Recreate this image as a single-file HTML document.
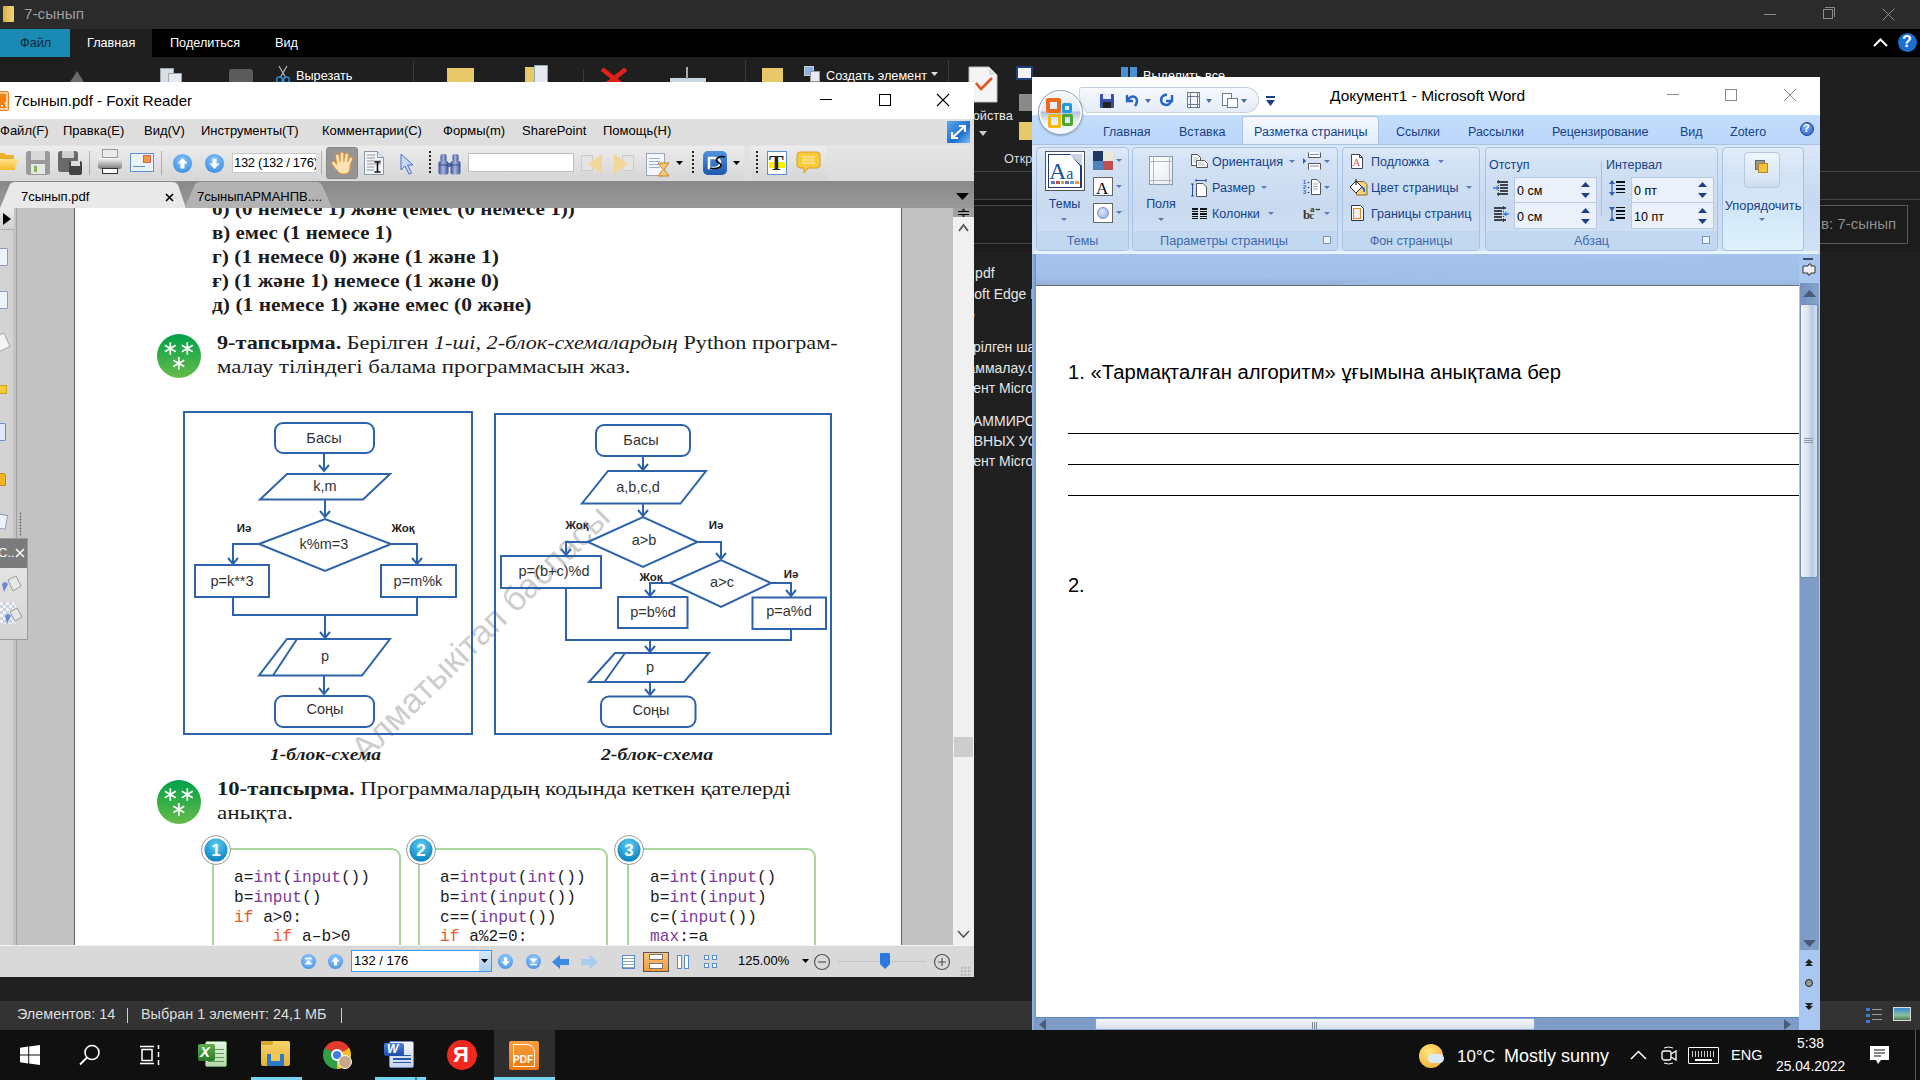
<!DOCTYPE html>
<html><head><meta charset="utf-8">
<style>
*{box-sizing:border-box}
html,body{margin:0;padding:0}
body{width:1920px;height:1080px;position:relative;overflow:hidden;background:#202020;font-family:"Liberation Sans",sans-serif}
.a{position:absolute}
.t{position:absolute;white-space:nowrap}
</style></head><body>
<!-- EXPLORER BACKGROUND -->
<div class="a" style="left:0;top:0;width:1920px;height:29px;background:#2b2b2b"></div>
<div class="a" style="left:3px;top:6px;width:11px;height:16px;background:linear-gradient(90deg,#d8b24a,#f3d27a);border-radius:1px"></div>
<div class="t" style="left:24px;top:5px;font-size:15.3px;color:#9e9e9e">7-сынып</div>
<div class="a" style="left:1764px;top:14px;width:12px;height:1px;background:#8a8a8a"></div>
<div class="a" style="left:1823px;top:9px;width:10px;height:10px;border:1px solid #8a8a8a"></div>
<div class="a" style="left:1825px;top:7px;width:10px;height:10px;border-top:1px solid #8a8a8a;border-right:1px solid #8a8a8a"></div>
<svg class="a" style="left:1882px;top:8px" width="13" height="13"><path d="M0.5 0.5L12.5 12.5M12.5 0.5L0.5 12.5" stroke="#8a8a8a" stroke-width="1"/></svg>
<div class="a" style="left:0;top:29px;width:1920px;height:28px;background:#000"></div>
<div class="a" style="left:0;top:29px;width:70px;height:28px;background:#1a8ab2"></div>
<div class="t" style="left:20px;top:36px;font-size:12.7px;color:#0d2a3a">Файл</div>
<div class="a" style="left:70px;top:29px;width:82px;height:28px;background:#1f1f1f"></div>
<div class="t" style="left:87px;top:36px;font-size:12.7px;color:#fff">Главная</div>
<div class="t" style="left:170px;top:36px;font-size:12.7px;color:#fff">Поделиться</div>
<div class="t" style="left:275px;top:36px;font-size:12.7px;color:#fff">Вид</div>
<svg class="a" style="left:1873px;top:38px" width="15" height="9"><path d="M1 8L7.5 1.5L14 8" stroke="#fff" stroke-width="2" fill="none"/></svg>
<div class="a" style="left:1898px;top:33px;width:19px;height:19px;border-radius:50%;background:#1a6fd0"></div>
<div class="t" style="left:1902px;top:33px;font-size:16px;font-weight:bold;color:#fff">?</div>
<div class="a" style="left:0;top:57px;width:1920px;height:114px;background:#1f1f1f"></div>
<svg class="a" style="left:70px;top:71px" width="14" height="11"><path d="M0 11L7 0L14 11Z" fill="#6a6a6a"/></svg>
<div class="a" style="left:160px;top:68px;width:14px;height:16px;background:#d8dde6;border:1px solid #9aa"></div>
<div class="a" style="left:168px;top:73px;width:14px;height:14px;background:#e6eaf0;border:1px solid #9aa"></div>
<div class="a" style="left:229px;top:69px;width:24px;height:16px;background:#5a5a5a;border-radius:3px"></div>
<svg class="a" style="left:276px;top:66px" width="14" height="18"><path d="M3 0L10 12M11 0L4 12" stroke="#bbb" stroke-width="1.2"/><circle cx="3.5" cy="14" r="3" fill="none" stroke="#2a8ad8" stroke-width="1.5"/><circle cx="10.5" cy="14" r="3" fill="none" stroke="#2a8ad8" stroke-width="1.5"/></svg>
<div class="t" style="left:296px;top:69px;font-size:12.7px;color:#fff">Вырезать</div>
<div class="a" style="left:413px;top:62px;width:1px;height:25px;background:#3a3a3a"></div>
<div class="a" style="left:447px;top:68px;width:27px;height:16px;background:#e8c96a"></div>
<div class="a" style="left:525px;top:67px;width:11px;height:16px;background:#e8c96a"></div>
<div class="a" style="left:534px;top:65px;width:14px;height:18px;background:#e6eaf0;border:1px solid #8aa"></div>
<div class="a" style="left:583px;top:69px;width:1px;height:20px;background:#3a3a3a"></div>
<svg class="a" style="left:600px;top:68px" width="28" height="16"><path d="M2 1L26 20M26 1L2 20" stroke="#e0201a" stroke-width="4.5"/></svg>
<div class="a" style="left:670px;top:78px;width:36px;height:6px;background:#c8d4e0"></div>
<div class="a" style="left:686px;top:67px;width:2px;height:12px;background:#aaa"></div>
<div class="a" style="left:745px;top:60px;width:1px;height:25px;background:#3a3a3a"></div>
<div class="a" style="left:762px;top:68px;width:21px;height:16px;background:#e8c96a"></div>
<div class="a" style="left:804px;top:66px;width:10px;height:10px;background:#8ab4e8;border:1px solid #ccc"></div>
<div class="a" style="left:810px;top:71px;width:10px;height:11px;background:#e6eaf0;border:1px solid #999"></div>
<div class="t" style="left:826px;top:69px;font-size:12.7px;color:#fff">Создать элемент</div>
<svg class="a" style="left:931px;top:72px" width="7" height="4"><path d="M0 0h7L3.5 4z" fill="#ddd"/></svg>
<div class="a" style="left:948px;top:60px;width:1px;height:110px;background:#3a3a3a"></div>
<!-- properties icon -->
<svg class="a" style="left:968px;top:66px" width="30" height="37"><path d="M1 1H21L29 9V36H1Z" fill="#f4f4f4" stroke="#bbb"/><path d="M21 1V9H29" fill="#ddd"/><path d="M8 17L13 23L24 12" stroke="#e0561c" stroke-width="2.6" fill="none"/></svg>
<div class="t" style="left:957px;top:109px;font-size:12.7px;color:#e8e8e8">Свойства</div>
<svg class="a" style="left:979px;top:131px" width="8" height="5"><path d="M0 0h8L4 5z" fill="#ccc"/></svg>
<div class="a" style="left:1016px;top:66px;width:17px;height:14px;background:#f4f4f4;border:2px solid #1f3f7a"></div>
<div class="a" style="left:1019px;top:94px;width:14px;height:17px;background:#8a8a8a"></div>
<div class="a" style="left:1019px;top:122px;width:13px;height:18px;background:#e8c96a"></div>
<div class="t" style="left:1004px;top:152px;font-size:12.7px;color:#d8d8d8">Открыть</div>
<div class="t" style="left:1143px;top:69px;font-size:12.7px;color:#fff">Выделить все</div>
<div class="a" style="left:1121px;top:67px;width:17px;height:14px;background:repeating-linear-gradient(90deg,#4a90d8 0 7px,transparent 7px 9px)"></div>
<div class="a" style="left:0;top:171px;width:1920px;height:1px;background:#464646"></div>
<div class="a" style="left:0;top:199px;width:1920px;height:1px;background:#464646"></div>
<div class="a" style="left:0;top:200px;width:1920px;height:51px;background:#1c1c1c"></div>
<div class="a" style="left:0;top:200px;width:1810px;height:5px;background:#171717"></div>
<div class="a" style="left:0;top:205px;width:1810px;height:1px;background:#464646"></div>
<div class="a" style="left:0;top:243px;width:1810px;height:1px;background:#464646"></div>
<div class="a" style="left:1780px;top:205px;width:128px;height:39px;border:1px solid #595959;background:#1c1c1c"></div>
<div class="t" style="left:1821px;top:215px;font-size:15px;color:#8e8e8e">в: 7-сынып</div>
<!-- file list text (clipped by windows) -->
<div class="t" style="left:921px;top:265px;font-size:14px;color:#e6e6e6">7сынып.pdf</div>
<div class="t" style="left:933px;top:286px;font-size:14px;color:#e6e6e6">Microsoft Edge PDF</div>
<div class="t" style="left:932px;top:306px;font-size:14px;color:#e6e6e6">24 135</div>
<div class="t" style="left:956px;top:339px;font-size:14px;color:#e6e6e6">Берілген шаблон</div>
<div class="t" style="left:929px;top:360px;font-size:14px;color:#e6e6e6">Программалау.docx</div>
<div class="t" style="left:933px;top:380px;font-size:14px;color:#e6e6e6">Документ Microsoft Word</div>
<div class="t" style="left:927px;top:413px;font-size:14px;color:#e6e6e6">ПРОГРАММИРОВАНИЕ</div>
<div class="t" style="left:956px;top:433px;font-size:14px;color:#e6e6e6">РАВНЫХ УСЛОВИЙ</div>
<div class="t" style="left:933px;top:453px;font-size:14px;color:#e6e6e6">Документ Microsoft Word</div>
<!-- status bar -->
<div class="a" style="left:0;top:1001px;width:1920px;height:29px;background:#333"></div>
<div class="t" style="left:17px;top:1006px;font-size:14.4px;color:#dedede">Элементов: 14</div>
<div class="a" style="left:127px;top:1008px;width:1px;height:15px;background:#cfcfcf"></div>
<div class="t" style="left:141px;top:1006px;font-size:14.4px;color:#dedede">Выбран 1 элемент: 24,1 МБ</div>
<div class="a" style="left:341px;top:1008px;width:1px;height:15px;background:#cfcfcf"></div>
<div class="a" style="left:1866px;top:1008px;width:4px;height:16px;background:repeating-linear-gradient(#3a7ad0 0 3px,transparent 3px 6px)"></div>
<div class="a" style="left:1872px;top:1009px;width:10px;height:14px;background:repeating-linear-gradient(#9a9a9a 0 1px,transparent 1px 5px)"></div>
<div class="a" style="left:1893px;top:1007px;width:18px;height:14px;background:linear-gradient(#3a8ad0,#8ac0a0 60%,#4a7a50);border:1px solid #ddd"></div>
<!-- FOXIT -->

<div id="fox" class="a" style="left:0;top:82px;width:974px;height:895px;background:#fff;overflow:hidden">
 <!-- title -->
 <svg class="a" style="left:-8px;top:8px" width="18" height="22"><rect x="1" y="1" width="16" height="20" rx="2.5" fill="#f08010"/><rect x="3" y="3" width="12" height="16" fill="none" stroke="#fff" stroke-width="1.2"/><path d="M9 16H11M12.5 13H14V16" stroke="#fff" stroke-width="1.3" fill="none"/></svg>
 <div class="t" style="left:14px;top:10px;font-size:15px;color:#000">7сынып.pdf - Foxit Reader</div>
 <div class="a" style="left:820px;top:17px;width:12px;height:1px;background:#000"></div>
 <div class="a" style="left:879px;top:12px;width:12px;height:12px;border:1px solid #000"></div>
 <svg class="a" style="left:936px;top:11px" width="14" height="14"><path d="M1 1L13 13M13 1L1 13" stroke="#000" stroke-width="1.1"/></svg>
 <!-- menu -->
 <div class="a" style="left:0;top:37px;width:974px;height:26px;background:#dedede"></div>
 <div class="t" style="left:0;top:41px;font-size:13px;color:#000">Файл(F)</div>
 <div class="t" style="left:63px;top:41px;font-size:13px;color:#000">Правка(E)</div>
 <div class="t" style="left:144px;top:41px;font-size:13px;color:#000">Вид(V)</div>
 <div class="t" style="left:201px;top:41px;font-size:13px;color:#000">Инструменты(T)</div>
 <div class="t" style="left:322px;top:41px;font-size:13px;color:#000">Комментарии(C)</div>
 <div class="t" style="left:443px;top:41px;font-size:13px;color:#000">Формы(m)</div>
 <div class="t" style="left:522px;top:41px;font-size:13px;color:#000">SharePoint</div>
 <div class="t" style="left:603px;top:41px;font-size:13px;color:#000">Помощь(H)</div>
 <div class="a" style="left:947px;top:39px;width:23px;height:22px;background:linear-gradient(135deg,#5aa9ef,#1d6fd0 60%,#7cc0f5)"></div>
 <svg class="a" style="left:947px;top:39px" width="23" height="22"><path d="M5 17L18 5M12 5h6v6M5 11v6h6" stroke="#fff" stroke-width="2.2" fill="none"/></svg>
 <!-- toolbar -->
 <div class="a" style="left:0;top:63px;width:974px;height:36px;background:linear-gradient(#e4e4e4,#dcdcdc)"></div>
 <div class="a" style="left:0;top:64px;width:744px;height:34px;background:linear-gradient(#ececec,#d6d6d6);border-radius:3px"></div>
 <div class="a" style="left:751px;top:64px;width:76px;height:34px;background:linear-gradient(#ececec,#d6d6d6);border-radius:3px"></div>
 <!-- folder -->
 <svg class="a" style="left:-3px;top:67px" width="22" height="24"><path d="M0 4H7L9 6H17V21H0Z" fill="#e9b12a"/><path d="M3 10H21L17.5 21H0Z" fill="url(#fg)"/><defs><linearGradient id="fg" x1="0" y1="0" x2="0" y2="1"><stop offset="0" stop-color="#ffe58a"/><stop offset="1" stop-color="#f4bb2a"/></linearGradient></defs></svg>
 <!-- save -->
 <div class="a" style="left:26px;top:69px;width:24px;height:24px;background:#9a9a9a;border-radius:3px"></div>
 <div class="a" style="left:31px;top:69px;width:14px;height:9px;background:#d8d8d8"></div>
 <div class="a" style="left:31px;top:82px;width:14px;height:10px;background:#e6e6e6"></div>
 <div class="a" style="left:34px;top:84px;width:3px;height:6px;background:#7cba4a"></div>
 <!-- save as -->
 <div class="a" style="left:58px;top:69px;width:20px;height:21px;background:#6a6a6a;border-radius:3px"></div>
 <div class="a" style="left:62px;top:69px;width:12px;height:7px;background:#cfcfcf"></div>
 <div class="a" style="left:69px;top:79px;width:13px;height:14px;background:#444;border-radius:2px"></div>
 <div class="a" style="left:71px;top:79px;width:9px;height:5px;background:#ddd"></div>
 <div class="a" style="left:89px;top:69px;width:1px;height:24px;background:#b0b0b0"></div>
 <!-- print -->
 <div class="a" style="left:102px;top:67px;width:16px;height:9px;background:#e8eee6;border:1px solid #999"></div>
 <div class="a" style="left:98px;top:76px;width:24px;height:11px;background:linear-gradient(#fafafa,#777);border-radius:3px"></div>
 <div class="a" style="left:102px;top:86px;width:16px;height:6px;background:#fff;border:1px solid #333"></div>
 <!-- email -->
 <div class="a" style="left:130px;top:71px;width:24px;height:19px;background:#eaf2fb;border:1px solid #5e8fd6"></div>
 <div class="a" style="left:143px;top:73px;width:8px;height:8px;background:#f29a3a;border:1px solid #c66"></div>
 <div class="a" style="left:133px;top:84px;width:12px;height:1px;background:#5e8fd6"></div>
 <div class="a" style="left:161px;top:69px;width:1px;height:24px;background:#b0b0b0"></div>
 <!-- up/down -->
 <div class="a" style="left:173px;top:72px;width:19px;height:19px;border-radius:50%;background:radial-gradient(circle at 50% 35%,#8cc8ff,#2a7fe0)"></div>
 <svg class="a" style="left:173px;top:72px" width="19" height="19"><path d="M9.5 4L4.5 9.5h3v5h4v-5h3z" fill="#fff"/></svg>
 <div class="a" style="left:205px;top:72px;width:19px;height:19px;border-radius:50%;background:radial-gradient(circle at 50% 35%,#8cc8ff,#2a7fe0)"></div>
 <svg class="a" style="left:205px;top:72px" width="19" height="19"><path d="M9.5 15L4.5 9.5h3v-5h4v5h3z" fill="#fff"/></svg>
 <div class="a" style="left:232px;top:71px;width:85px;height:20px;background:#fff;border:1px solid #c8c8c8"></div>
 <div class="t" style="left:234px;top:73px;font-size:13px;color:#000;letter-spacing:-0.3px">132 (132 / 176)</div>
 <div class="a" style="left:316px;top:71px;width:4px;height:20px;background:#dedede"></div>
 <div class="a" style="left:321px;top:69px;width:1px;height:24px;background:#b0b0b0"></div>
 <!-- hand -->
 <div class="a" style="left:326px;top:65px;width:32px;height:32px;background:#959595;border:1px solid #858585;border-radius:3px"></div>
 <svg class="a" style="left:331px;top:69px" width="23" height="25"><g stroke="#e0923c" stroke-width="4.4" stroke-linecap="round"><path d="M7.5 12L6.3 5M11 12L11 3M14.5 12L15.8 4M17.5 13.5L19.8 8M6 17L2.5 12"/></g><path d="M5 11Q5 10 7 10H17Q19.5 10 19.5 13V17Q19.5 23.5 12.5 23.5Q7 23.5 5 18Z" fill="#e0923c"/><g stroke="#fbe3b6" stroke-width="2.6" stroke-linecap="round"><path d="M7.5 12L6.3 5M11 12L11 3M14.5 12L15.8 4M17.5 13.5L19.8 8M6 17L2.5 12"/></g><path d="M6 11.5Q6 11 7.5 11H17Q18.5 11 18.5 13.5V17Q18.5 22.5 12.5 22.5Q7.8 22.5 6 18Z" fill="#fbe3b6"/></svg>
 <!-- select text -->
 <svg class="a" style="left:364px;top:69px" width="22" height="25"><path d="M0.5 0.5H13.5L19.5 6.5V23.5H0.5Z" fill="#f2f6fc" stroke="#8a96aa"/><path d="M13.5 0.5V6.5H19.5" fill="#dfe8f4" stroke="#8a96aa"/><path d="M3 4H11M3 7H11M3 10H17M3 13H17M3 16H10M3 19H10" stroke="#9a9288" stroke-width="1"/><path d="M10.5 11H16.5M13.5 11V21M10.5 21H16.5" stroke="#111" stroke-width="1.6"/></svg>
 <!-- pointer -->
 <svg class="a" style="left:399px;top:70px" width="16" height="24"><path d="M2 2L2 18L6 14L10 22L12.5 21L8.5 13L14 13Z" fill="#c9d8f6" stroke="#4a6fc6" stroke-width="1"/></svg>
 <div class="a" style="left:429px;top:69px;width:2px;height:24px;background:repeating-linear-gradient(#223 0 2px,transparent 2px 4px)"></div>
 <!-- binoculars -->
 <svg class="a" style="left:438px;top:71px" width="24" height="22"><defs><linearGradient id="bn" x1="0" y1="0" x2="1" y2="0"><stop offset="0" stop-color="#3a5290"/><stop offset=".45" stop-color="#a4b8e4"/><stop offset="1" stop-color="#3a5290"/></linearGradient></defs><rect x="2.5" y="1" width="6" height="8" rx="2" fill="url(#bn)"/><rect x="14.5" y="1" width="6" height="8" rx="2" fill="url(#bn)"/><rect x="0.5" y="8" width="10" height="13.5" rx="2" fill="url(#bn)"/><rect x="12.5" y="8" width="10" height="13.5" rx="2" fill="url(#bn)"/><rect x="9" y="10" width="5" height="4" fill="#4a62a0"/><path d="M1 12H10M13 12H22" stroke="#2a3a70" stroke-width=".8"/></svg>
 <div class="a" style="left:468px;top:71px;width:106px;height:19px;background:#fff;border:1px solid #bdbdbd"></div>
 <!-- prev/next -->
 <div class="a" style="left:581px;top:73px;width:12px;height:16px;background:#e4e4e4;border:1px solid #ccc"></div>
 <svg class="a" style="left:586px;top:71px" width="18" height="22"><path d="M16 1L2 11L16 21Z" fill="#f3d79a"/></svg>
 <div class="a" style="left:622px;top:73px;width:12px;height:16px;background:#e4e4e4;border:1px solid #ccc"></div>
 <svg class="a" style="left:612px;top:71px" width="18" height="22"><path d="M2 1L16 11L2 21Z" fill="#f3d79a"/></svg>
 <!-- doc hourglass -->
 <div class="a" style="left:646px;top:71px;width:19px;height:23px;background:#f4f8fc;border:1px solid #9aa8bc"></div>
 <div class="a" style="left:649px;top:76px;width:11px;height:12px;background:repeating-linear-gradient(#9ab0d0 0 1px,transparent 1px 3px)"></div>
 <svg class="a" style="left:657px;top:80px" width="13" height="15"><path d="M1 1h11L7 7.5 12 14H1l5-6.5z" fill="#f5c57d" stroke="#c6842a"/></svg>
 <svg class="a" style="left:676px;top:79px" width="7" height="4"><path d="M0 0h7L3.5 4z" fill="#000"/></svg>
 <div class="a" style="left:692px;top:69px;width:2px;height:24px;background:repeating-linear-gradient(#223 0 2px,transparent 2px 4px)"></div>
 <!-- DS icon -->
 <div class="a" style="left:703px;top:69px;width:24px;height:24px;background:linear-gradient(#4f93e0,#1e58b0);border-radius:5px"></div>
 <svg class="a" style="left:703px;top:69px" width="24" height="24"><path d="M6 7h5c4 0 6 2 6 5s-2 5-6 5H6z" fill="none" stroke="#fff" stroke-width="2.5"/><path d="M22 6c-6-2-12 3-6 6s-2 7-9 5" fill="none" stroke="#000" stroke-width="1.6"/></svg>
 <svg class="a" style="left:733px;top:79px" width="7" height="4"><path d="M0 0h7L3.5 4z" fill="#000"/></svg>
 <div class="a" style="left:756px;top:69px;width:2px;height:24px;background:repeating-linear-gradient(#223 0 2px,transparent 2px 4px)"></div>
 <!-- T icon -->
 <div class="a" style="left:767px;top:69px;width:20px;height:24px;background:#fff;border:1px solid #5b8fd0"></div>
 <div class="a" style="left:769px;top:80px;width:16px;height:6px;background:#ffef00"></div>
 <div class="t" style="left:769px;top:68px;font-size:22px;font-family:'Liberation Serif',serif;color:#222;font-weight:bold">T</div>
 <!-- bubble -->
 <svg class="a" style="left:796px;top:69px" width="25" height="24"><path d="M4 1h17a3 3 0 013 3v10a3 3 0 01-3 3H12l-4 5v-5H4a3 3 0 01-3-3V4a3 3 0 013-3z" fill="#f6cb3c" stroke="#d8a21a"/><path d="M6 6h13M6 9h13M6 12h13" stroke="#fff7c0" stroke-width="1"/></svg>
 <!-- tab strip -->
 <div class="a" style="left:0;top:99px;width:974px;height:27px;background:linear-gradient(#888,#9a9a9a)"></div>
 <svg class="a" style="left:0;top:99px" width="360" height="27"><path d="M0 27L10 3Q12 1 15 1H173Q176 1 178 4L186 27Z" fill="#e9e9e9"/><path d="M185 27L195 3Q197 1 200 1H317Q320 1 322 4L332 27Z" fill="#b3b3b3"/></svg>
 <div class="t" style="left:21px;top:107px;font-size:13px;color:#000">7сынып.pdf</div>
 <svg class="a" style="left:165px;top:111px" width="9" height="9"><path d="M1 1L8 8M8 1L1 8" stroke="#000" stroke-width="1.6"/></svg>
 <div class="t" style="left:197px;top:107px;font-size:13px;color:#000">7сыныпАРМАНПВ....</div>
 <svg class="a" style="left:956px;top:111px" width="13" height="7"><path d="M0 0h13L6.5 7z" fill="#000"/></svg>
 <!-- content -->
 <div class="a" style="left:0;top:126px;width:974px;height:737px;background:#c2c2c2"></div>
 <div class="a" style="left:0;top:126px;width:13px;height:737px;background:#d3d3d3"></div>
 <div class="a" style="left:13px;top:126px;width:3px;height:737px;background:#c4c4c4"></div>
 <div class="a" style="left:16px;top:126px;width:1px;height:737px;background:#a0a0a0"></div>
 <div class="a" style="left:0;top:126px;width:14px;height:22px;background:linear-gradient(#ececec,#d0d0d0);border-bottom:1px solid #b0b0b0"></div>
 <svg class="a" style="left:3px;top:131px" width="8" height="12"><path d="M0 0L8 6L0 12Z" fill="#000"/></svg>
 <div id="page" class="a" style="left:75px;top:126px;width:826px;height:737px;background:#fff;overflow:hidden"><div class="a" style="left:-75px;top:-208px;width:974px;height:945px"><svg class="a" style="left:0;top:0" width="974" height="945" font-family="Liberation Sans, sans-serif">
<text x="0" y="0" font-size="34.5" fill="#9a9a9a" fill-opacity="0.5" transform="translate(365 763) rotate(-44.6)">Алматыкітап баспасы</text>
<g fill="none" stroke="#2c63aa" stroke-width="2">
<rect x="184" y="412" width="288" height="322"/>
<rect x="275" y="423" width="99" height="30" rx="8"/>
<path d="M324 453V471"/><path d="M319 465L324 471L329 465"/>
<path d="M287 474H390L363 499.5H260Z"/>
<path d="M325 500V517"/><path d="M320 511L325 517L330 511"/>
<path d="M259 544L325 519L391 544L325 571Z"/>
<path d="M259 544H233V564"/><path d="M228 558L233 564L238 558"/>
<path d="M391 544H417V564"/><path d="M412 558L417 564L422 558"/>
<rect x="195" y="565" width="74" height="32"/>
<rect x="381" y="565" width="75" height="32"/>
<path d="M233 597V615H417V597"/>
<path d="M325 615V638"/><path d="M320 632L325 638L330 632"/>
<path d="M287 639H390L362 675.5H259Z"/><path d="M297 639L273 675.5"/>
<path d="M324 676V694"/><path d="M319 688L324 694L329 688"/>
<rect x="275" y="696" width="99" height="31" rx="8"/>
<rect x="495" y="414" width="336" height="320"/>
<rect x="596" y="425" width="94" height="31" rx="8"/>
<path d="M643 456V470"/><path d="M638 464L643 470L648 464"/>
<path d="M608 471H706L680.5 503.5H582Z"/>
<path d="M643 504V516"/><path d="M638 510L643 516L648 510"/>
<path d="M588 542L643 517L697.5 542L643 567Z"/>
<path d="M588 542H566V555"/><path d="M561 549L566 555L571 549"/>
<rect x="501" y="556" width="100" height="32"/>
<path d="M697.5 542H721V559"/><path d="M716 553L721 559L726 553"/>
<path d="M670 583L721 560L771 583L721 607Z"/>
<path d="M670 583H650V596"/><path d="M645 590L650 596L655 590"/>
<rect x="618" y="597" width="69.5" height="31"/>
<path d="M771 583H791V596"/><path d="M786 590L791 596L796 590"/>
<rect x="752.5" y="597.5" width="73.5" height="31.5"/>
<path d="M566 588V640H791V629"/>
<path d="M650 640V652"/><path d="M645 646L650 652L655 646"/>
<path d="M615 653H709L684 682H589Z"/><path d="M625 653L604.5 682"/>
<path d="M650 682V695"/><path d="M645 689L650 695L655 689"/>
<rect x="601" y="696.5" width="94.5" height="30.5" rx="8"/>
</g>
<g fill="#333" font-size="14.5" text-anchor="middle">
<text x="324" y="443">Басы</text>
<text x="325" y="491">k,m</text>
<text x="324" y="549">k%m=3</text>
<text x="232" y="586">p=k**3</text>
<text x="418" y="586">p=m%k</text>
<text x="325" y="661">p</text>
<text x="325" y="714">Соңы</text>
<text x="641" y="445">Басы</text>
<text x="638" y="492">a,b,c,d</text>
<text x="644" y="545">a&gt;b</text>
<text x="554" y="576">p=(b+c)%d</text>
<text x="722" y="587">a&gt;c</text>
<text x="653" y="617">p=b%d</text>
<text x="789" y="616">p=a%d</text>
<text x="650" y="672">p</text>
<text x="651" y="715">Соңы</text>
</g>
<g fill="#222" font-size="11.5" font-weight="bold" text-anchor="middle">
<text x="244" y="532">Иә</text>
<text x="403" y="532">Жоқ</text>
<text x="577" y="529">Жоқ</text>
<text x="716" y="529">Иә</text>
<text x="651" y="581">Жоқ</text>
<text x="791" y="578">Иә</text>
</g>
<g fill="none" stroke="#a9d79b" stroke-width="2">
<path d="M228 849H392A8 8 0 0 1 400 857V950M213 864V950"/>
<path d="M434 849H599A8 8 0 0 1 607 857V950M419 864V950"/>
<path d="M642 849H807A8 8 0 0 1 815 857V950M628 864V950"/>
</g>
<defs><radialGradient id="bg1" cx="50%" cy="30%" r="70%"><stop offset="0" stop-color="#5fd0f5"/><stop offset="1" stop-color="#0a80c0"/></radialGradient>
<linearGradient id="gg" x1="0" y1="0" x2="0" y2="1"><stop offset="0" stop-color="#00a14a"/><stop offset="1" stop-color="#66bb48"/></linearGradient></defs>
<circle cx="216" cy="850" r="14.5" fill="#fff" stroke="#999" stroke-width="1"/><circle cx="216" cy="850" r="11.5" fill="url(#bg1)"/>
<circle cx="421" cy="850" r="14.5" fill="#fff" stroke="#999" stroke-width="1"/><circle cx="421" cy="850" r="11.5" fill="url(#bg1)"/>
<circle cx="629" cy="850" r="14.5" fill="#fff" stroke="#999" stroke-width="1"/><circle cx="629" cy="850" r="11.5" fill="url(#bg1)"/>
<g fill="#fff" font-size="17" font-weight="bold" text-anchor="middle">
<text x="216" y="856">1</text><text x="421" y="856">2</text><text x="629" y="856">3</text>
</g>
<circle cx="179" cy="356" r="22" fill="url(#gg)"/>
<circle cx="179" cy="802" r="22" fill="url(#gg)"/>
<path d="M170.30 342.20L170.30 354.80M164.84 345.35L175.76 351.65M164.84 351.65L175.76 345.35M187.30 342.20L187.30 354.80M181.84 345.35L192.76 351.65M181.84 351.65L192.76 345.35M178.80 357.10L178.80 369.70M173.34 360.25L184.26 366.55M173.34 366.55L184.26 360.25M170.30 788.20L170.30 800.80M164.84 791.35L175.76 797.65M164.84 797.65L175.76 791.35M187.30 788.20L187.30 800.80M181.84 791.35L192.76 797.65M181.84 797.65L192.76 791.35M178.80 803.10L178.80 815.70M173.34 806.25L184.26 812.55M173.34 812.55L184.26 806.25" stroke="#fff" stroke-width="1.7" fill="none"/>
</svg>
<div class="t" style="left:212px;top:199.1px;font-size:19px;line-height:19px;transform:scaleX(1.113);transform-origin:0 0;font-family:'Liberation Serif',serif;color:#1c1c1c;font-weight:bold">б) (0 немесе 1) және (емес (0 немесе 1))</div>
<div class="t" style="left:212px;top:223.1px;font-size:19px;line-height:19px;transform:scaleX(1.1);transform-origin:0 0;font-family:'Liberation Serif',serif;color:#1c1c1c;font-weight:bold">в) емес (1 немесе 1)</div>
<div class="t" style="left:212px;top:247.1px;font-size:19px;line-height:19px;transform:scaleX(1.135);transform-origin:0 0;font-family:'Liberation Serif',serif;color:#1c1c1c;font-weight:bold">г) (1 немесе 0) және (1 және 1)</div>
<div class="t" style="left:212px;top:271.1px;font-size:19px;line-height:19px;transform:scaleX(1.135);transform-origin:0 0;font-family:'Liberation Serif',serif;color:#1c1c1c;font-weight:bold">ғ) (1 және 1) немесе (1 және 0)</div>
<div class="t" style="left:212px;top:295.1px;font-size:19px;line-height:19px;transform:scaleX(1.13);transform-origin:0 0;font-family:'Liberation Serif',serif;color:#1c1c1c;font-weight:bold">д) (1 немесе 1) және емес (0 және)</div>
<div class="t" style="left:217px;top:332.8px;font-size:19px;line-height:19px;transform:scaleX(1.17);transform-origin:0 0;font-family:'Liberation Serif',serif;color:#1c1c1c;"><b>9-тапсырма.</b> Берілген <i>1-ші, 2-блок-схемалардың</i> Python програм-</div>
<div class="t" style="left:217px;top:356.5px;font-size:19px;line-height:19px;transform:scaleX(1.2);transform-origin:0 0;font-family:'Liberation Serif',serif;color:#1c1c1c;">малау тіліндегі балама программасын жаз.</div>
<div class="t" style="left:270px;top:745.8px;font-size:17px;line-height:17px;transform:scaleX(1.147);transform-origin:0 0;font-family:'Liberation Serif',serif;color:#1c1c1c;"><b><i>1-блок-схема</i></b></div>
<div class="t" style="left:601px;top:745.8px;font-size:17px;line-height:17px;transform:scaleX(1.157);transform-origin:0 0;font-family:'Liberation Serif',serif;color:#1c1c1c;"><b><i>2-блок-схема</i></b></div>
<div class="t" style="left:217px;top:778.8px;font-size:19px;line-height:19px;transform:scaleX(1.19);transform-origin:0 0;font-family:'Liberation Serif',serif;color:#1c1c1c;"><b>10-тапсырма.</b> Программалардың кодында кеткен қателерді</div>
<div class="t" style="left:217px;top:802.5px;font-size:19px;line-height:19px;transform:scaleX(1.22);transform-origin:0 0;font-family:'Liberation Serif',serif;color:#1c1c1c;">анықта.</div>
<div class="t" style="left:234px;top:870.3px;font-size:16.2px;line-height:16.2px;font-family:'Liberation Mono',monospace;color:#1a1a1a">a=<span style="color:#7a3a9e">int</span>(<span style="color:#7a3a9e">input</span>())</div>
<div class="t" style="left:234px;top:889.9px;font-size:16.2px;line-height:16.2px;font-family:'Liberation Mono',monospace;color:#1a1a1a">b=<span style="color:#7a3a9e">input</span>()</div>
<div class="t" style="left:234px;top:909.5px;font-size:16.2px;line-height:16.2px;font-family:'Liberation Mono',monospace;color:#1a1a1a"><span style="color:#ee5a26">if</span> a&gt;0:</div>
<div class="t" style="left:234px;top:929.1px;font-size:16.2px;line-height:16.2px;font-family:'Liberation Mono',monospace;color:#1a1a1a">&nbsp;&nbsp;&nbsp;&nbsp;<span style="color:#ee5a26">if</span> a–b&gt;0</div>
<div class="t" style="left:440px;top:870.3px;font-size:16.2px;line-height:16.2px;font-family:'Liberation Mono',monospace;color:#1a1a1a">a=<span style="color:#7a3a9e">intput</span>(<span style="color:#7a3a9e">int</span>())</div>
<div class="t" style="left:440px;top:889.9px;font-size:16.2px;line-height:16.2px;font-family:'Liberation Mono',monospace;color:#1a1a1a">b=<span style="color:#7a3a9e">int</span>(<span style="color:#7a3a9e">input</span>())</div>
<div class="t" style="left:440px;top:909.5px;font-size:16.2px;line-height:16.2px;font-family:'Liberation Mono',monospace;color:#1a1a1a">c==(<span style="color:#7a3a9e">input</span>())</div>
<div class="t" style="left:440px;top:929.1px;font-size:16.2px;line-height:16.2px;font-family:'Liberation Mono',monospace;color:#1a1a1a"><span style="color:#ee5a26">if</span> a%2=0:</div>
<div class="t" style="left:650px;top:870.3px;font-size:16.2px;line-height:16.2px;font-family:'Liberation Mono',monospace;color:#1a1a1a">a=<span style="color:#7a3a9e">int</span>(<span style="color:#7a3a9e">input</span>()</div>
<div class="t" style="left:650px;top:889.9px;font-size:16.2px;line-height:16.2px;font-family:'Liberation Mono',monospace;color:#1a1a1a">b=<span style="color:#7a3a9e">int</span>(<span style="color:#7a3a9e">input</span>)</div>
<div class="t" style="left:650px;top:909.5px;font-size:16.2px;line-height:16.2px;font-family:'Liberation Mono',monospace;color:#1a1a1a">c=(<span style="color:#7a3a9e">input</span>())</div>
<div class="t" style="left:650px;top:929.1px;font-size:16.2px;line-height:16.2px;font-family:'Liberation Mono',monospace;color:#1a1a1a"><span style="color:#7a3a9e">max</span>:=a</div></div></div>
 <div class="a" style="left:74px;top:126px;width:1px;height:737px;background:#666"></div>
 <div class="a" style="left:953px;top:126px;width:21px;height:737px;background:#f0f0f0"></div>
 <div class="a" style="left:953px;top:126px;width:21px;height:9px;background:#a0a0a0"></div>
 <svg class="a" style="left:957px;top:126px" width="13" height="9"><path d="M1 3.5h11M1 6.5h11" stroke="#000" stroke-width="1.1"/><path d="M4.5 2.5L6.5 0.5L8.5 2.5M4.5 7.5L6.5 9L8.5 7.5" fill="#000"/></svg>
 <svg class="a" style="left:958px;top:141px" width="11" height="9"><path d="M1 8L5.5 2L10 8" stroke="#555" stroke-width="1.8" fill="none"/></svg>
 <div class="a" style="left:901px;top:126px;width:1px;height:737px;background:#666"></div>
 <div class="a" style="left:954px;top:655px;width:19px;height:20px;background:#cdcdcd"></div>
 <svg class="a" style="left:957px;top:848px" width="13" height="9"><path d="M1 1L6.5 7L12 1" stroke="#555" stroke-width="1.6" fill="none"/></svg>
 <!-- sidebar icons (abs y-82) -->
 <div class="a" style="left:-4px;top:166px;width:12px;height:18px;background:#eef3fb;border:1px solid #8a9ab8;border-radius:1px"></div>
 <div class="a" style="left:-4px;top:209px;width:12px;height:18px;background:#eef3fb;border:1px solid #8a9ab8;border-radius:1px"></div>
 <div class="a" style="left:-4px;top:252px;width:12px;height:16px;background:#f4f4f4;border:1px solid #9aa;transform:rotate(-25deg)"></div>
 <div class="a" style="left:-4px;top:303px;width:11px;height:9px;background:#f6c83a;border:1px solid #c9a020"></div>
 <div class="a" style="left:-4px;top:341px;width:10px;height:18px;background:#dde8f8;border:1px solid #6a8ac8;border-radius:2px"></div>
 <div class="a" style="left:-3px;top:391px;width:9px;height:13px;background:#f2b624;border:1px solid #c08a10;border-radius:3px 3px 1px 1px"></div>
 <div class="a" style="left:-4px;top:432px;width:11px;height:15px;background:#eef3fb;border:1px solid #8a9ab8;transform:rotate(10deg)"></div>
 <div class="a" style="left:19px;top:430px;width:3px;height:24px;background:radial-gradient(circle,#777 0.8px,transparent 1.2px) 0 0/3px 3px"></div>
 <!-- float panel -->
 <div class="a" style="left:0;top:456px;width:28px;height:102px;background:linear-gradient(#eaeaea,#d4d4d4);border:1px solid #9a9a9a;border-left:none"></div>
 <div class="a" style="left:0;top:457px;width:27px;height:29px;background:#7b7b7b"></div>
 <div class="t" style="left:-2px;top:463px;font-size:13px;color:#fff">C..</div>
 <svg class="a" style="left:15px;top:466px" width="10" height="10"><path d="M1 1L9 9M9 1L1 9" stroke="#fff" stroke-width="1.5"/></svg>
 <svg class="a" style="left:0;top:492px" width="22" height="22"><path d="M8 6L16 2L21 12L13 17Z" fill="#e8e8e8" stroke="#999"/><path d="M2 10Q5 6 8 10L4 18Z" fill="#6a8ad8"/></svg>
 <div class="a" style="left:0;top:520px;width:16px;height:22px;background:repeating-conic-gradient(#c8d4e4 0 25%,#f4f4f4 0 50%) 0 0/6px 6px"></div>
 <svg class="a" style="left:2px;top:522px" width="22" height="22"><path d="M8 8L15 4L20 13L13 17Z" fill="#e4e4e4" stroke="#999"/><path d="M3 12Q6 8 9 12L5 20Z" fill="#6a8ad8"/></svg>
 <!-- bottom status -->
 <div class="a" style="left:0;top:863px;width:974px;height:32px;background:#d9d9d9;border-top:1px solid #f4f4f4"></div>

 <!-- status controls (abs y - 82) -->
 <div class="a" style="left:301px;top:872px;width:15px;height:15px;border-radius:50%;background:radial-gradient(circle at 50% 35%,#9fd2ff,#2f86e0)"></div>
 <svg class="a" style="left:301px;top:872px" width="15" height="15"><path d="M4 4.5H11" stroke="#fff" stroke-width="1.5"/><path d="M7.5 6L3.5 10.5H11.5Z" fill="#fff"/></svg>
 <div class="a" style="left:328px;top:872px;width:15px;height:15px;border-radius:50%;background:radial-gradient(circle at 50% 35%,#9fd2ff,#2f86e0)"></div>
 <svg class="a" style="left:328px;top:872px" width="15" height="15"><path d="M7.5 3L3.5 7.5H6V11.5H9V7.5H11.5Z" fill="#fff"/></svg>
 <div class="a" style="left:351px;top:868px;width:141px;height:22px;border:1px solid #3c9bea;background:#fff"></div>
 <div class="a" style="left:479px;top:869px;width:12px;height:20px;background:linear-gradient(#d6e8fa,#a9cdf2)"></div>
 <svg class="a" style="left:481px;top:877px" width="7" height="4"><path d="M0 0h7L3.5 4z" fill="#000"/></svg>
 <div class="t" style="left:354px;top:871px;font-size:13px;color:#000">132 / 176</div>
 <div class="a" style="left:498px;top:872px;width:15px;height:15px;border-radius:50%;background:radial-gradient(circle at 50% 35%,#9fd2ff,#2f86e0)"></div>
 <svg class="a" style="left:498px;top:872px" width="15" height="15"><path d="M7.5 12L3.5 7.5H6V3.5H9V7.5H11.5Z" fill="#fff"/></svg>
 <div class="a" style="left:526px;top:872px;width:15px;height:15px;border-radius:50%;background:radial-gradient(circle at 50% 35%,#9fd2ff,#2f86e0)"></div>
 <svg class="a" style="left:526px;top:872px" width="15" height="15"><path d="M4 10.5H11" stroke="#fff" stroke-width="1.5"/><path d="M7.5 9L3.5 4.5H11.5Z" fill="#fff"/></svg>
 <svg class="a" style="left:552px;top:873px" width="18" height="14"><path d="M0 7L8 0V4H17V10H8V14Z" fill="#3a8ae6"/></svg>
 <svg class="a" style="left:580px;top:873px" width="18" height="14"><path d="M18 7L10 0V4H1V10H10V14Z" fill="#a9cdf2"/></svg>
 <div class="a" style="left:622px;top:873px;width:13px;height:14px;background:repeating-linear-gradient(#fff 0 2px,#8ab 2px 3px);border:1px solid #5a8ad0"></div>
 <div class="a" style="left:643px;top:870px;width:26px;height:20px;background:linear-gradient(#ffc37a,#f39a3a);border:1px solid #555"></div>
 <div class="a" style="left:649px;top:872px;width:14px;height:6px;background:#fff;border:1px solid #777"></div>
 <div class="a" style="left:649px;top:881px;width:14px;height:6px;background:#fff;border:1px solid #777"></div>
 <div class="a" style="left:677px;top:873px;width:5px;height:14px;background:#fff;border:1px solid #5a8ad0"></div>
 <div class="a" style="left:684px;top:873px;width:5px;height:14px;background:#fff;border:1px solid #5a8ad0"></div>
 <div class="a" style="left:704px;top:873px;width:5px;height:5px;border:1px solid #5a8ad0;background:#fff"></div>
 <div class="a" style="left:712px;top:873px;width:5px;height:5px;border:1px solid #5a8ad0;background:#fff"></div>
 <div class="a" style="left:704px;top:881px;width:5px;height:5px;border:1px solid #5a8ad0;background:#fff"></div>
 <div class="a" style="left:712px;top:881px;width:5px;height:5px;border:1px solid #5a8ad0;background:#fff"></div>
 <div class="t" style="left:738px;top:871px;font-size:13px;color:#000">125.00%</div>
 <svg class="a" style="left:802px;top:877px" width="7" height="4"><path d="M0 0h7L3.5 4z" fill="#000"/></svg>
 <svg class="a" style="left:813px;top:871px" width="18" height="18"><circle cx="9" cy="9" r="7.5" fill="none" stroke="#555" stroke-width="1.2"/><path d="M5 9H13" stroke="#555" stroke-width="1.2"/></svg>
 <div class="a" style="left:838px;top:879px;width:88px;height:1px;background:#c4c4c4"></div>
 <svg class="a" style="left:880px;top:871px" width="10" height="16"><path d="M0 1Q0 0 1 0H9Q10 0 10 1V11L5 16L0 11Z" fill="#2a78e0"/></svg>
 <svg class="a" style="left:933px;top:871px" width="18" height="18"><circle cx="9" cy="9" r="7.5" fill="none" stroke="#555" stroke-width="1.2"/><path d="M5 9H13M9 5V13" stroke="#555" stroke-width="1.2"/></svg>
 <div class="a" style="left:960px;top:884px;width:10px;height:10px;background:radial-gradient(circle,#b4b4b4 1px,transparent 1.5px) 0 0/3.5px 3.5px"></div>
</div>

<!-- WORD -->
<div id="word" class="a" style="left:1032px;top:77px;width:788px;height:953px;background:#fff;overflow:hidden">
 <!-- title bar -->
 <div class="a" style="left:0;top:0;width:788px;height:38px;background:#fff"></div>
 <div class="a" style="left:46px;top:10px;width:181px;height:26px;border-radius:0 13px 13px 0;background:linear-gradient(#f6f9fd,#e4ecf6);border:1px solid #c3d0e0;border-left:none"></div>
 <svg class="a" style="left:42px;top:9px" width="16" height="29"><path d="M0 0H7Q3 14 14 29H0Z" fill="#fff"/><path d="M6 1.5Q2.5 14 13.5 27.5" fill="none" stroke="#c3d0e0"/></svg>
 <!-- qat icons -->
 <div class="a" style="left:68px;top:17px;width:14px;height:14px;background:#3a4fa8;border-radius:1px"></div>
 <div class="a" style="left:71px;top:17px;width:8px;height:5px;background:#e8ecf6"></div>
 <div class="a" style="left:71px;top:25px;width:8px;height:6px;background:#222"></div>
 <svg class="a" style="left:92px;top:15px" width="16" height="16"><path d="M3 3v6h6" fill="none" stroke="#2a63c6" stroke-width="2.4"/><path d="M3 9Q7 3 11 5Q15 8 11 14" fill="none" stroke="#2a63c6" stroke-width="2.4"/></svg>
 <svg class="a" style="left:113px;top:22px" width="6" height="4"><path d="M0 0h6L3 4z" fill="#4a6aa0"/></svg>
 <svg class="a" style="left:127px;top:15px" width="16" height="16"><path d="M13 3v6h-6" fill="none" stroke="#2a63c6" stroke-width="2.4"/><path d="M12 9A5 5 0 1 1 8 3" fill="none" stroke="#2a63c6" stroke-width="2.6"/></svg>
 <div class="a" style="left:155px;top:15px;width:13px;height:16px;border:1px solid #6a7c96;background:#f4f6fa"></div>
 <div class="a" style="left:158px;top:15px;width:1px;height:16px;background:#6a7c96"></div>
 <div class="a" style="left:165px;top:15px;width:1px;height:16px;background:#6a7c96"></div>
 <div class="a" style="left:155px;top:19px;width:13px;height:1px;background:#6a7c96"></div>
 <div class="a" style="left:155px;top:27px;width:13px;height:1px;background:#6a7c96"></div>
 <svg class="a" style="left:174px;top:22px" width="6" height="4"><path d="M0 0h6L3 4z" fill="#4a6aa0"/></svg>
 <div class="a" style="left:190px;top:16px;width:10px;height:13px;border:1px solid #6a7c96;background:#fff"></div>
 <div class="a" style="left:195px;top:21px;width:11px;height:10px;border:1px solid #6a7c96;background:#fff"></div>
 <svg class="a" style="left:209px;top:22px" width="6" height="4"><path d="M0 0h6L3 4z" fill="#4a6aa0"/></svg>
 <div class="a" style="left:234px;top:19px;width:9px;height:2px;background:#1e3f86"></div>
 <svg class="a" style="left:234px;top:23px" width="9" height="6"><path d="M0 0h9L4.5 6z" fill="#1e3f86"/></svg>
 <div class="t" style="left:298px;top:10px;font-size:15.5px;color:#000">Документ1 - Microsoft Word</div>
 <div class="a" style="left:635px;top:17px;width:12px;height:1px;background:#888"></div>
 <div class="a" style="left:693px;top:12px;width:12px;height:12px;border:1px solid #888"></div>
 <svg class="a" style="left:751px;top:11px" width="14" height="14"><path d="M1 1L13 13M13 1L1 13" stroke="#888" stroke-width="1"/></svg>
 <!-- tabs row -->
 <div class="a" style="left:0;top:38px;width:788px;height:30px;background:linear-gradient(#c4ddfc,#bad6fa)"></div>
 <div class="a" style="left:210px;top:39px;width:137px;height:32px;border:1px solid #a8c3e6;border-bottom:none;border-radius:3px 3px 0 0;background:linear-gradient(#f5f9fe,#e0ebf8)"></div>
 <div class="t" style="left:71px;top:48px;font-size:12.5px;color:#15428b">Главная</div>
 <div class="t" style="left:147px;top:48px;font-size:12.5px;color:#15428b">Вставка</div>
 <div class="t" style="left:222px;top:48px;font-size:12.5px;color:#15428b">Разметка страницы</div>
 <div class="t" style="left:364px;top:48px;font-size:12.5px;color:#15428b">Ссылки</div>
 <div class="t" style="left:436px;top:48px;font-size:12.5px;color:#15428b">Рассылки</div>
 <div class="t" style="left:520px;top:48px;font-size:12.5px;color:#15428b">Рецензирование</div>
 <div class="t" style="left:648px;top:48px;font-size:12.5px;color:#15428b">Вид</div>
 <div class="t" style="left:698px;top:48px;font-size:12.5px;color:#15428b">Zotero</div>
 <div class="a" style="left:768px;top:45px;width:14px;height:14px;border-radius:50%;background:radial-gradient(circle at 40% 35%,#7fb2f6,#1f56c2);border:1px solid #1a44a0"></div>
 <div class="t" style="left:771px;top:45px;font-size:11px;font-weight:bold;color:#fff">?</div>
 <!-- office button -->
 <div class="a" style="left:6px;top:13px;width:45px;height:45px;border-radius:50%;background:linear-gradient(#f6f8fb 0%,#e4e9f0 45%,#b4c4dc 50%,#e8eef6 70%,#fafcfe 100%);border:1px solid #8ea2bc;box-shadow:inset 0 0 0 1.5px #fff,0 1px 2px rgba(0,0,0,.25)"></div>
 <div class="a" style="left:14px;top:21px;width:15px;height:15px;border:4px solid #ea6a1e;border-radius:2px"></div>
 <div class="a" style="left:30px;top:26px;width:10px;height:10px;border:3px solid #1e9ae0;border-radius:2px"></div>
 <div class="a" style="left:16px;top:37px;width:13px;height:14px;border:3.5px solid #f6b80e;border-radius:2px"></div>
 <div class="a" style="left:30px;top:37px;width:11px;height:12px;border:3px solid #4aa830;border-radius:2px"></div>
 <!-- ribbon -->
 <div class="a" style="left:0;top:67px;width:788px;height:110px;background:linear-gradient(#d9e7f8,#c5d9f1 50%,#d2e2f5);border-top:1px solid #a8c3e6"></div>
 <div class="a" style="left:2px;top:174px;width:784px;height:3px;background:#e6f4ff"></div>
 <div class="a" style="left:4px;top:70px;width:93px;height:104px;border:1px solid #aac2e2;border-radius:4px;background:linear-gradient(#dfeaf8,#d3e2f4 12%,#c9daf0 60%,#d5e4f5)"></div><div class="a" style="left:5px;top:154px;width:91px;height:19px;background:#c2d8f1;border-radius:0 0 3px 3px"></div><div class="t" style="left:4px;width:93px;text-align:center;top:157px;font-size:12.5px;color:#3e6aaa">Темы</div>
<div class="a" style="left:100px;top:70px;width:206px;height:104px;border:1px solid #aac2e2;border-radius:4px;background:linear-gradient(#dfeaf8,#d3e2f4 12%,#c9daf0 60%,#d5e4f5)"></div><div class="a" style="left:101px;top:154px;width:204px;height:19px;background:#c2d8f1;border-radius:0 0 3px 3px"></div><div class="t" style="left:89px;width:206px;text-align:center;top:157px;font-size:12.7px;color:#3e6aaa">Параметры страницы</div>
<div class="a" style="left:310px;top:70px;width:138px;height:104px;border:1px solid #aac2e2;border-radius:4px;background:linear-gradient(#dfeaf8,#d3e2f4 12%,#c9daf0 60%,#d5e4f5)"></div><div class="a" style="left:311px;top:154px;width:136px;height:19px;background:#c2d8f1;border-radius:0 0 3px 3px"></div><div class="t" style="left:310px;width:138px;text-align:center;top:157px;font-size:12.5px;color:#3e6aaa">Фон страницы</div>
<div class="a" style="left:453px;top:70px;width:233px;height:104px;border:1px solid #aac2e2;border-radius:4px;background:linear-gradient(#dfeaf8,#d3e2f4 12%,#c9daf0 60%,#d5e4f5)"></div><div class="a" style="left:454px;top:154px;width:231px;height:19px;background:#c2d8f1;border-radius:0 0 3px 3px"></div><div class="t" style="left:443px;width:233px;text-align:center;top:157px;font-size:12.5px;color:#3e6aaa">Абзац</div>
 <!-- Темы content -->
 <div class="a" style="left:13px;top:74px;width:40px;height:40px;border:1px solid #555;background:#fff;padding:2px"></div>
 <div class="a" style="left:16px;top:77px;width:34px;height:34px;border:1px solid #243c78;background:#fff"></div>
 <svg class="a" style="left:38px;top:77px" width="12" height="34"><path d="M0 0L12 12V34H10V12Z" fill="#1f3a7a"/><path d="M0 0H12V12Z" fill="#c6d2e6"/></svg>
 <div class="t" style="left:17px;top:82px;font-family:'Liberation Serif',serif;font-size:24px;line-height:24px;color:#1f4fa0">A<span style="font-size:16px">a</span></div>
 <div class="a" style="left:19px;top:104px;width:28px;height:3px;background:linear-gradient(90deg,#4f81bd 0 14%,transparent 14% 17%,#c0504d 17% 31%,transparent 31% 34%,#9bbb59 34% 48%,transparent 48% 51%,#8064a2 51% 65%,transparent 65% 68%,#4bacc6 68% 82%,transparent 82% 85%,#f79646 85%)"></div>
 <div class="t" style="left:4px;width:57px;text-align:center;top:120px;font-size:12.5px;color:#15428b">Темы</div>
 <svg class="a" style="left:29px;top:141px" width="6" height="3"><path d="M0 0h6L3 3z" fill="#5b7bb0"/></svg>
 <div class="a" style="left:61px;top:74px;width:20px;height:19px;background:linear-gradient(90deg,#1f3864 50%,#ece9d8 50%)"></div>
 <div class="a" style="left:61px;top:84px;width:20px;height:9px;background:linear-gradient(90deg,#4f81bd 50%,#c0504d 50%)"></div>
 <div class="a" style="left:61px;top:100px;width:20px;height:19px;border:1px solid #666;background:#fff"></div>
 <div class="t" style="left:64px;top:102px;font-family:'Liberation Serif',serif;font-size:17px;color:#000">A</div>
 <div class="a" style="left:61px;top:126px;width:20px;height:20px;border:1px solid #666;background:#fff"></div>
 <div class="a" style="left:65px;top:130px;width:12px;height:12px;border-radius:50%;background:radial-gradient(circle at 40% 35%,#dfe8ff,#8aa6e6);border:1px solid #7a90c8"></div>
 <svg class="a" style="left:84px;top:82px" width="6" height="3"><path d="M0 0h6L3 3z" fill="#5b7bb0"/></svg>
 <svg class="a" style="left:84px;top:108px" width="6" height="3"><path d="M0 0h6L3 3z" fill="#5b7bb0"/></svg>
 <svg class="a" style="left:84px;top:134px" width="6" height="3"><path d="M0 0h6L3 3z" fill="#5b7bb0"/></svg>
 <!-- Параметры -->
 <div class="a" style="left:117px;top:79px;width:24px;height:29px;border:1px solid #8a96a6;background:linear-gradient(135deg,#fff,#e8ecf2)"></div>
 <div class="a" style="left:121px;top:79px;width:1px;height:29px;background:#b0b8c4"></div>
 <div class="a" style="left:137px;top:79px;width:1px;height:29px;background:#b0b8c4"></div>
 <div class="a" style="left:117px;top:84px;width:24px;height:1px;background:#b0b8c4"></div>
 <div class="a" style="left:117px;top:103px;width:24px;height:1px;background:#b0b8c4"></div>
 <div class="t" style="left:100px;width:58px;text-align:center;top:120px;font-size:12.5px;color:#15428b">Поля</div>
 <svg class="a" style="left:126px;top:141px" width="6" height="3"><path d="M0 0h6L3 3z" fill="#5b7bb0"/></svg>
 <svg class="a" style="left:158px;top:76px" width="19" height="16"><path d="M1.5 1.5H7.5L10.5 4.5V12.5H1.5Z" fill="#fff" stroke="#555"/><path d="M3 5H8M3 7H8M3 9H8" stroke="#9aa" stroke-width=".8"/><path d="M6.5 7.5H14.5L17.5 10.5V14.5H6.5Z" fill="#fff" stroke="#555"/><path d="M8 10H14M8 12H15" stroke="#9aa" stroke-width=".8"/></svg>
 <div class="t" style="left:180px;top:78px;font-size:12.5px;color:#15428b">Ориентация</div>
 <svg class="a" style="left:257px;top:83px" width="6" height="3"><path d="M0 0h6L3 3z" fill="#5b7bb0"/></svg>
 <svg class="a" style="left:158px;top:101px" width="19" height="19"><path d="M6 1V4M16 1V4M6 2.5H16" stroke="#2a4a9a" stroke-width="1"/><path d="M1 6H4M1 18H4M2.5 6V18" stroke="#2a4a9a" stroke-width="1"/><path d="M6.5 5.5H13L16.5 9V18.5H6.5Z" fill="#fff" stroke="#555"/></svg>
 <div class="t" style="left:180px;top:104px;font-size:12.5px;color:#15428b">Размер</div>
 <svg class="a" style="left:229px;top:109px" width="6" height="3"><path d="M0 0h6L3 3z" fill="#5b7bb0"/></svg>
 <div class="a" style="left:160px;top:131px;width:15px;height:11px;background:repeating-linear-gradient(#111 0 1.5px,transparent 1.5px 2.5px)"></div>
 <div class="a" style="left:166px;top:131px;width:2px;height:11px;background:#d0dff2"></div>
 <div class="t" style="left:180px;top:130px;font-size:12.5px;color:#15428b">Колонки</div>
 <svg class="a" style="left:236px;top:135px" width="6" height="3"><path d="M0 0h6L3 3z" fill="#5b7bb0"/></svg>
 <svg class="a" style="left:270px;top:75px" width="20" height="18"><path d="M6.5 0.5V5.5H18.5V0.5" fill="#fff" stroke="#555"/><path d="M8 2.5H17" stroke="#7a8ab0"/><path d="M6.5 17.5V11.5H18.5V17.5" fill="#fff" stroke="#555"/><path d="M8 14H17" stroke="#7a8ab0"/><path d="M1 6L4 9L1 12Z" fill="#2a5cc0"/></svg>
 <svg class="a" style="left:271px;top:102px" width="18" height="16"><path d="M8.5 0.5H14L17.5 4V15.5H8.5Z" fill="#fff" stroke="#555"/><path d="M10 5H15M10 7.5H15M10 10H15" stroke="#8a9ac0" stroke-width=".9"/><text x="0" y="5" font-size="5.5" font-weight="bold" fill="#2a5cc0" font-family="Liberation Sans">1</text><text x="0" y="10" font-size="5.5" font-weight="bold" fill="#2a5cc0" font-family="Liberation Sans">2</text><text x="0" y="15" font-size="5.5" font-weight="bold" fill="#2a5cc0" font-family="Liberation Sans">3</text><path d="M5.5 3V4M5.5 8V9M5.5 13V14" stroke="#111" stroke-width="1.2"/></svg>
 <svg class="a" style="left:271px;top:128px" width="18" height="15"><text x="0" y="13.5" font-size="13" font-weight="bold" fill="#3a3a30" font-family="Liberation Serif">b</text><text x="6.5" y="13.5" font-size="10" font-weight="bold" fill="#3a3a30" font-family="Liberation Serif">c</text><text x="7" y="7" font-size="9" font-weight="bold" fill="#3a3a30" font-family="Liberation Serif">a</text><path d="M12.5 4.5H17" stroke="#3a3a30" stroke-width="1.3"/></svg>
 <svg class="a" style="left:292px;top:83px" width="6" height="3"><path d="M0 0h6L3 3z" fill="#5b7bb0"/></svg>
 <svg class="a" style="left:292px;top:109px" width="6" height="3"><path d="M0 0h6L3 3z" fill="#5b7bb0"/></svg>
 <svg class="a" style="left:292px;top:135px" width="6" height="3"><path d="M0 0h6L3 3z" fill="#5b7bb0"/></svg>
 <div class="a" style="left:291px;top:159px;width:8px;height:8px;border:1px solid #7a94bc;background:#eef3fa"></div>
 <!-- Фон -->
 <svg class="a" style="left:318px;top:76px" width="14" height="17"><path d="M1.5 1.5H9.5L12.5 4.5V15.5H1.5Z" fill="#fff" stroke="#445"/><path d="M9.5 1.5V4.5H12.5" fill="none" stroke="#445"/><text x="2.5" y="13" font-size="11" fill="#e05a5a" font-family="Liberation Serif">A</text></svg>
 <div class="t" style="left:339px;top:78px;font-size:12.5px;color:#15428b">Подложка</div>
 <svg class="a" style="left:406px;top:83px" width="6" height="3"><path d="M0 0h6L3 3z" fill="#5b7bb0"/></svg>
 <svg class="a" style="left:317px;top:101px" width="19" height="18"><path d="M7.5 3.5H15L18 6.5V17H7.5Z" fill="#f6d27a" stroke="#8a6a20"/><path d="M1 9L7 3L13 9L7 15Z" fill="#fff" stroke="#222"/><path d="M7 1V7" stroke="#222" stroke-width="1.2"/><path d="M12 9Q16 10 15 14" fill="none" stroke="#2a6ad0" stroke-width="2"/></svg>
 <div class="t" style="left:339px;top:104px;font-size:12.5px;color:#15428b">Цвет страницы</div>
 <svg class="a" style="left:434px;top:109px" width="6" height="3"><path d="M0 0h6L3 3z" fill="#5b7bb0"/></svg>
 <svg class="a" style="left:318px;top:127px" width="15" height="18"><path d="M1.5 1.5H10.5L13.5 4.5V16.5H1.5Z" fill="#fff" stroke="#334"/><path d="M3.5 4.5H10.5V14.5H3.5Z" fill="#f0f0f4" stroke="#e08a2a" stroke-width="1.2"/></svg>
 <div class="t" style="left:339px;top:130px;font-size:12.5px;color:#15428b">Границы страниц</div>
 <!-- Абзац -->
 <div class="t" style="left:457px;top:81px;font-size:12.5px;color:#15428b">Отступ</div>
 <div class="t" style="left:574px;top:81px;font-size:12.5px;color:#15428b">Интервал</div>
 <div class="a" style="left:569px;top:84px;width:1px;height:55px;background:#a9bfdc"></div>
 <svg class="a" style="left:461px;top:103px" width="17" height="16"><path d="M4 2H15M7 5H15M7 8H15M7 11H15M4 14H15" stroke="#111" stroke-width="1.3"/><path d="M0 8H5" stroke="#3a7ae0" stroke-width="1.4"/><path d="M3.5 5.5L6.5 8L3.5 10.5Z" fill="#3a7ae0"/><path d="M5.5 0V16" stroke="#111" stroke-width=".8" stroke-dasharray="1 1.5"/></svg>
 <svg class="a" style="left:461px;top:129px" width="17" height="16"><path d="M1 2H13M1 5H9M1 8H9M1 11H9M1 14H13" stroke="#111" stroke-width="1.3"/><path d="M11 8H16" stroke="#3a7ae0" stroke-width="1.4"/><path d="M13.5 5.5L10.5 8L13.5 10.5Z" fill="#3a7ae0"/><path d="M10.5 0V16" stroke="#111" stroke-width=".8" stroke-dasharray="1 1.5"/></svg>
 <div class="a" style="left:584px;top:104px;width:9px;height:13px;background:repeating-linear-gradient(#111 0 1.5px,transparent 1.5px 3.5px)"></div>
 <div class="a" style="left:584px;top:130px;width:9px;height:13px;background:repeating-linear-gradient(#111 0 1.5px,transparent 1.5px 3.5px)"></div>
 <svg class="a" style="left:577px;top:103px" width="6" height="16"><path d="M3 1V15" stroke="#2a5cc0" stroke-width="1.2"/><path d="M0 4L3 0L6 4ZM0 12L3 16L6 12Z" fill="#2a5cc0"/></svg>
 <svg class="a" style="left:577px;top:129px" width="6" height="16"><path d="M3 1V15" stroke="#2a5cc0" stroke-width="1.2"/><path d="M0 1L3 5L6 1ZM0 15L3 11L6 15Z" fill="#2a5cc0"/></svg>
 <div class="a" style="left:482px;top:100px;width:83px;height:52px;border:1px solid #b9cbe3;background:#eaf1fb"></div>
 <div class="a" style="left:482px;top:125px;width:83px;height:1px;background:#b9cbe3"></div>
 <div class="a" style="left:599px;top:100px;width:83px;height:52px;border:1px solid #b9cbe3;background:#eaf1fb"></div>
 <div class="a" style="left:599px;top:125px;width:83px;height:1px;background:#b9cbe3"></div>
 <div class="t" style="left:485px;top:107px;font-size:12.5px;color:#000">0 см</div>
 <div class="t" style="left:485px;top:133px;font-size:12.5px;color:#000">0 см</div>
 <div class="t" style="left:602px;top:107px;font-size:12.5px;color:#000">0 пт</div>
 <div class="t" style="left:602px;top:133px;font-size:12.5px;color:#000">10 пт</div>
 <svg class="a" style="left:549px;top:105px" width="9" height="16"><path d="M0 5L4.5 0L9 5ZM0 11L4.5 16L9 11Z" fill="#1e3f86"/></svg>
 <svg class="a" style="left:549px;top:131px" width="9" height="16"><path d="M0 5L4.5 0L9 5ZM0 11L4.5 16L9 11Z" fill="#1e3f86"/></svg>
 <svg class="a" style="left:666px;top:105px" width="9" height="16"><path d="M0 5L4.5 0L9 5ZM0 11L4.5 16L9 11Z" fill="#1e3f86"/></svg>
 <svg class="a" style="left:666px;top:131px" width="9" height="16"><path d="M0 5L4.5 0L9 5ZM0 11L4.5 16L9 11Z" fill="#1e3f86"/></svg>
 <div class="a" style="left:670px;top:159px;width:8px;height:8px;border:1px solid #7a94bc;background:#eef3fa"></div>
 <!-- Упорядочить -->
 <div class="a" style="left:690px;top:70px;width:82px;height:104px;border:1px solid #aac2e2;border-radius:4px;background:linear-gradient(#e2edf9,#d3e3f5 25%,#d3e6f7 60%,#def2fd)"></div>
 <div class="a" style="left:712px;top:75px;width:36px;height:36px;border:1px solid #b8cae0;border-radius:4px;background:linear-gradient(#eef4fb,#dbe7f5 70%,#cbdcf0)"></div>
 <div class="a" style="left:723px;top:83px;width:10px;height:10px;background:#999;border:1px solid #666"></div>
 <div class="a" style="left:726px;top:86px;width:10px;height:10px;background:#f2c33a;border:1px solid #b08a20"></div>
 <div class="t" style="left:690px;width:82px;text-align:center;top:121px;font-size:12.9px;color:#15428b">Упорядочить</div>
 <svg class="a" style="left:727px;top:141px" width="6" height="3"><path d="M0 0h6L3 3z" fill="#5b7bb0"/></svg>

 <!-- below ribbon -->
 <div class="a" style="left:0;top:177px;width:788px;height:31px;background:linear-gradient(#a6c3eb,#a2bfe8 75%,#94b0d8)"></div>
 <svg class="a" style="left:300px;top:177px" width="488" height="31"><path d="M0 31Q200 5 488 0V31Z" fill="#a2c0ea" opacity=".6"/></svg>
 <div class="a" style="left:767px;top:177px;width:21px;height:30px;background:#a9c7f0"></div>
 <div class="a" style="left:771px;top:181px;width:10px;height:2px;background:#3d4a5c"></div>
 <svg class="a" style="left:770px;top:186px" width="14" height="13"><path d="M1 3H6L7 1H9V3H13V10H9L8 12H6V10H1Z" fill="#f0eef4" stroke="#333" stroke-width="1"/></svg>
 <div class="a" style="left:0;top:208px;width:767px;height:1px;background:#6b6b6b"></div>
 <!-- left border -->
 <div class="a" style="left:0;top:177px;width:4px;height:776px;background:linear-gradient(90deg,#9bb6de,#6a92cc)"></div>
 <!-- document -->
 <div class="a" style="left:4px;top:209px;width:763px;height:731px;background:#fff"></div>
 <div class="t" style="left:36px;top:285px;font-size:20px;line-height:20px;color:#000;transform:scaleX(1.013);transform-origin:0 0">1. «Тармақталған алгоритм» ұғымына анықтама бер</div>
 <div class="a" style="left:36px;top:356px;width:731px;height:1px;background:#000"></div>
 <div class="a" style="left:36px;top:387px;width:731px;height:1px;background:#000"></div>
 <div class="a" style="left:36px;top:418px;width:731px;height:1px;background:#000"></div>
 <div class="t" style="left:36px;top:498px;font-size:20px;line-height:20px;color:#000">2.</div>
 <!-- vscroll -->
 <div class="a" style="left:767px;top:206px;width:21px;height:747px;background:#a9c7f0"></div>
 <div class="a" style="left:768px;top:206px;width:19px;height:667px;background:#7e9cc6"></div>
 <div class="a" style="left:768px;top:206px;width:19px;height:21px;background:linear-gradient(90deg,#7391bd,#86a3cc)"></div>
 <svg class="a" style="left:771px;top:213px" width="13" height="7"><path d="M0 7L6.5 0L13 7Z" fill="#4b5a78"/></svg>
 <div class="a" style="left:768px;top:227px;width:18px;height:274px;border:1px solid #6f8fbd;border-radius:2px;background:linear-gradient(90deg,#f0f3f8,#dde5f0 40%,#b7c9e2 70%,#d6e1f0)"></div>
 <div class="a" style="left:772px;top:361px;width:9px;height:6px;background:repeating-linear-gradient(#8a98aa 0 1px,transparent 1px 2px)"></div>
 <svg class="a" style="left:771px;top:863px" width="13" height="7"><path d="M0 0L6.5 7L13 0Z" fill="#4b5a78"/></svg>
 <div class="a" style="left:767px;top:873px;width:21px;height:80px;background:#a9c7f0"></div>
 <svg class="a" style="left:772px;top:882px" width="10" height="70"><path d="M5 0L1 4h8zM5 3L1 7h8z" fill="#222"/><circle cx="5" cy="24" r="3.5" fill="#999" stroke="#222"/><path d="M5 51L1 47h8zM5 48L1 44h8z" fill="#222"/></svg>
 <!-- hscroll -->
 <div class="a" style="left:4px;top:940px;width:763px;height:13px;background:#7e9cc6;border-top:1px solid #5b86c8"></div>
 <svg class="a" style="left:7px;top:942px" width="7" height="11"><path d="M7 0L0 5.5L7 11Z" fill="#4b5a78"/></svg>
 <div class="a" style="left:63px;top:941px;width:440px;height:12px;background:linear-gradient(#f3f5f9,#d9e1ec);border:1px solid #8aa5cc;border-radius:2px"></div>
 <div class="a" style="left:280px;top:945px;width:5px;height:7px;background:repeating-linear-gradient(90deg,#7a889a 0 1px,transparent 1px 2px)"></div>
 <svg class="a" style="left:752px;top:942px" width="7" height="11"><path d="M0 0L7 5.5L0 11Z" fill="#4b5a78"/></svg>
</div>
<!-- TASKBAR -->
<div class="a" style="left:0;top:1030px;width:1920px;height:50px;background:#101010"></div>
<!-- start -->
<svg class="a" style="left:20px;top:1045px" width="20" height="20"><path d="M0 2.8L8.2 1.6V9.5H0ZM9.2 1.5L20 0V9.5H9.2ZM0 10.5H8.2V18.4L0 17.2ZM9.2 10.5H20V20L9.2 18.5Z" fill="#fff"/></svg>
<!-- search -->
<svg class="a" style="left:79px;top:1044px" width="22" height="22"><circle cx="13" cy="8.5" r="7" fill="none" stroke="#fff" stroke-width="1.6"/><path d="M8 13.5L1 20.5" stroke="#fff" stroke-width="1.8"/></svg>
<!-- task view -->
<svg class="a" style="left:139px;top:1044px" width="22" height="22"><path d="M1 2.5H15M1 19.5H15" stroke="#fff" stroke-width="1.5"/><rect x="3" y="5.5" width="10" height="11" fill="none" stroke="#fff" stroke-width="1.5"/><path d="M19.5 1V5M19.5 8V13M19.5 16V21" stroke="#fff" stroke-width="1.5"/></svg>
<!-- excel -->
<div class="a" style="left:205px;top:1041px;width:22px;height:26px;background:linear-gradient(#e8f2e6,#b8d8b0);border:1px solid #6aa060;border-radius:2px"></div>
<div class="a" style="left:208px;top:1049px;width:16px;height:15px;background:repeating-linear-gradient(#5a9a50 0 1px,transparent 1px 4px)"></div>
<div class="a" style="left:198px;top:1044px;width:17px;height:17px;background:linear-gradient(#5cb04a,#2a7a2a);border-radius:2px"></div>
<div class="t" style="left:200px;top:1043px;font-size:15px;font-weight:bold;font-style:italic;color:#fff">X</div>
<!-- explorer -->
<div class="a" style="left:261px;top:1041px;width:29px;height:25px;background:linear-gradient(#f6d36a,#e4b336);border-radius:2px"></div>
<div class="a" style="left:261px;top:1041px;width:12px;height:4px;background:#d8a830;border-radius:1px"></div>
<div class="a" style="left:267px;top:1054px;width:17px;height:12px;background:#2a78c8"></div>
<div class="a" style="left:271px;top:1054px;width:9px;height:7px;background:#f0c850"></div>
<div class="a" style="left:251px;top:1077px;width:51px;height:3px;background:#76d4f0"></div>
<!-- chrome -->
<div class="a" style="left:323px;top:1041px;width:28px;height:28px;border-radius:50%;background:conic-gradient(from -60deg,#e23b2e 0 120deg,#f8c21a 120deg 240deg,#2f9e44 240deg 360deg)"></div>
<div class="a" style="left:331px;top:1049px;width:12px;height:12px;border-radius:50%;background:#3d7be0;border:2px solid #fff"></div>
<div class="a" style="left:338px;top:1055px;width:14px;height:14px;border-radius:50%;background:#c8a888;border:1px solid #fff"></div>
<!-- word -->
<div class="a" style="left:389px;top:1041px;width:25px;height:27px;background:linear-gradient(#f6f8fc,#c6d4ea);border:1px solid #6a8ac0;border-radius:2px"></div>
<div class="a" style="left:393px;top:1055px;width:18px;height:10px;background:repeating-linear-gradient(#2a5ab0 0 1.5px,transparent 1.5px 3.5px)"></div>
<div class="a" style="left:384px;top:1043px;width:20px;height:13px;background:linear-gradient(#4a84d8,#1e4ca8);border-radius:2px"></div>
<div class="t" style="left:387px;top:1042px;font-size:12px;font-weight:bold;font-style:italic;color:#fff">W</div>
<div class="a" style="left:375px;top:1077px;width:51px;height:3px;background:#76d4f0"></div>
<div class="a" style="left:415px;top:1077px;width:2px;height:3px;background:#3a8aa8"></div>
<!-- yandex -->
<div class="a" style="left:447px;top:1040px;width:30px;height:30px;border-radius:50%;background:#f0281e"></div>
<div class="t" style="left:453px;top:1042px;font-size:22px;font-weight:bold;color:#fff">Я</div>
<!-- foxit -->
<div class="a" style="left:494px;top:1030px;width:61px;height:50px;background:#2e2e2e"></div>
<div class="a" style="left:509px;top:1041px;width:30px;height:29px;background:linear-gradient(#f8a040,#e8780e);border-radius:2px"></div>
<div class="a" style="left:513px;top:1044px;width:22px;height:23px;border:1.5px solid #fff;border-top-right-radius:8px;opacity:.9"></div>
<div class="t" style="left:513px;top:1054px;font-size:10px;font-weight:bold;color:#fff">PDF</div>
<div class="a" style="left:494px;top:1077px;width:61px;height:3px;background:#76d4f0"></div>
<!-- tray -->
<div class="a" style="left:1419px;top:1044px;width:24px;height:24px;border-radius:50%;background:radial-gradient(circle at 40% 35%,#ffe680,#f5a623)"></div>
<div class="a" style="left:1428px;top:1054px;width:16px;height:9px;border-radius:5px;background:#dbeaf8"></div>
<div class="t" style="left:1457px;top:1047px;font-size:17px;color:#fff">10°C</div>
<div class="t" style="left:1504px;top:1046px;font-size:18px;color:#fff">Mostly sunny</div>
<svg class="a" style="left:1630px;top:1050px" width="17" height="10"><path d="M1 9L8.5 1.5L16 9" stroke="#fff" stroke-width="1.5" fill="none"/></svg>
<svg class="a" style="left:1661px;top:1046px" width="16" height="19"><rect x="1" y="5" width="9" height="9" rx="2" fill="none" stroke="#fff" stroke-width="1.3"/><path d="M10 8L15 5V14L10 11" fill="none" stroke="#fff" stroke-width="1.3"/><path d="M3 2Q8 0 12 2M3 17Q8 19 12 17" fill="none" stroke="#fff" stroke-width="1"/></svg>
<div class="a" style="left:1688px;top:1047px;width:31px;height:17px;border:1.3px solid #fff;border-radius:1px"></div>
<div class="a" style="left:1692px;top:1051px;width:23px;height:6px;background:repeating-linear-gradient(90deg,#fff 0 1.5px,transparent 1.5px 3px);opacity:.8"></div>
<div class="a" style="left:1695px;top:1059px;width:17px;height:1.5px;background:#fff"></div>
<div class="t" style="left:1731px;top:1047px;font-size:14.5px;color:#fff">ENG</div>
<div class="t" style="left:1797px;top:1036px;font-size:13.8px;color:#fff">5:38</div>
<div class="t" style="left:1776px;top:1059px;font-size:13.8px;color:#fff">25.04.2022</div>
<svg class="a" style="left:1869px;top:1045px" width="21" height="20"><path d="M1 1H20V15H12L9 19L7 15H1Z" fill="#fff"/><path d="M5 5H16M5 8H16M5 11H12" stroke="#101010" stroke-width="1.2"/></svg>
<div class="a" style="left:1915px;top:1030px;width:1px;height:50px;background:#555"></div>
</body></html>
